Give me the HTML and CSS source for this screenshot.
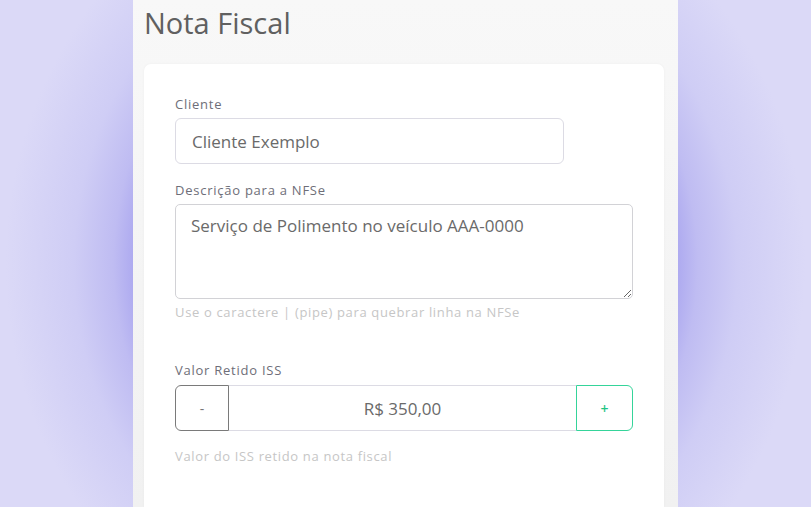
FILE: index.html
```html
<!DOCTYPE html>
<html lang="pt-BR">
<head>
<meta charset="utf-8">
<title>Nota Fiscal</title>
<link rel="stylesheet" href="styles.css">
</head>
<body>
<main class="panel">
  <h1 class="title">Nota Fiscal</h1>
  <section class="card">
    <div class="field">
      <label class="label" for="cliente">Cliente</label>
      <input class="input input-client" id="cliente" type="text" value="Cliente Exemplo" readonly>
    </div>
    <div class="field field-desc">
      <label class="label" for="desc">Descrição para a NFSe</label>
      <textarea class="textarea" id="desc" readonly>Serviço de Polimento no veículo AAA-0000</textarea>
      <p class="help">Use o caractere | (pipe) para quebrar linha na NFSe</p>
    </div>
    <div class="field field-iss">
      <label class="label" for="iss">Valor Retido ISS</label>
      <div class="stepper">
        <button class="step step-minus" type="button">-</button>
        <input class="step-value" id="iss" type="text" value="R$ 350,00" readonly>
        <button class="step step-plus" type="button">+</button>
      </div>
      <p class="help help-iss">Valor do ISS retido na nota fiscal</p>
    </div>
  </section>
</main>
</body>
</html>
```

FILE: styles.css
```css
html, body {
  margin: 0;
  height: 100%;
}

body {
  overflow: hidden;
  font-family: "Open Sans", "Liberation Sans", sans-serif;
  background:
    radial-gradient(ellipse 400px 420px at 50% 52%,
      #9d98ee 0%,
      #a7a3ef 66%,
      #bfbcf2 73%,
      #cfcdf5 83%,
      #dbd9f7 100%);
  background-color: #dfddf8;
}

.panel {
  box-sizing: border-box;
  width: 545px;
  height: 100%;
  margin: 0 auto;
  padding: 0 14px 0 11px;
  background: linear-gradient(#f8f8f8, #f1f1f1);
  display: flex;
  flex-direction: column;
}

.title {
  margin: 5px 0 0;
  font-size: 29px;
  line-height: 36px;
  font-weight: 500;
  color: #606060;
}

.card {
  flex: 1;
  margin-top: 23px;
  background: #ffffff;
  border-radius: 7px 7px 0 0;
  padding: 32px 31px 0;
  box-shadow: 0 0 3px rgba(0, 0, 0, 0.04);
}

.field {
  display: flex;
  flex-direction: column;
  align-items: flex-start;
}

.field-desc {
  margin-top: 18px;
}

.field-iss {
  margin-top: 42px;
}

.label {
  font-size: 13px;
  line-height: 16px;
  letter-spacing: 0.75px;
  color: #6e6e78;
  margin-bottom: 6px;
}

.field-iss .label {
  margin-bottom: 7px;
}

.input {
  box-sizing: border-box;
  height: 46px;
  border: 1px solid #dcdbe4;
  border-radius: 6px;
  padding: 0 16px;
  font-family: inherit;
  font-size: 17px;
  color: #6a6a6a;
  background: #fff;
  outline: none;
}

.input-client {
  width: 389px;
}

.textarea {
  box-sizing: border-box;
  width: 458px;
  height: 95px;
  border: 1px solid #d2d2d6;
  border-radius: 5px;
  padding: 9px 15px;
  font-family: inherit;
  font-size: 17px;
  line-height: 24px;
  color: #6a6a6a;
  background: #fff;
  resize: vertical;
  outline: none;
}

.help {
  margin: 5px 0 0;
  font-size: 13px;
  line-height: 16px;
  letter-spacing: 0.65px;
  color: #c6c6c6;
}

.help-iss {
  margin-top: 17px;
}

.stepper {
  display: flex;
  width: 458px;
  height: 46px;
}

.step {
  box-sizing: border-box;
  height: 46px;
  background: #fff;
  font-family: inherit;
  font-size: 14px;
  padding: 0;
  cursor: pointer;
}

.step-minus {
  width: 54px;
  border: 1px solid #7a7a7a;
  border-radius: 6px 0 0 6px;
  color: #777;
}

.step-plus {
  width: 57px;
  border: 1px solid #35d49a;
  border-radius: 0 6px 6px 0;
  color: #1fc483;
  font-weight: 600;
}

.step-value {
  box-sizing: border-box;
  flex: 1;
  min-width: 0;
  height: 46px;
  border: 1px solid #dcdbe4;
  border-left: none;
  border-right: none;
  text-align: center;
  font-family: inherit;
  font-size: 17px;
  color: #6a6a6a;
  background: #fff;
  outline: none;
}
```
